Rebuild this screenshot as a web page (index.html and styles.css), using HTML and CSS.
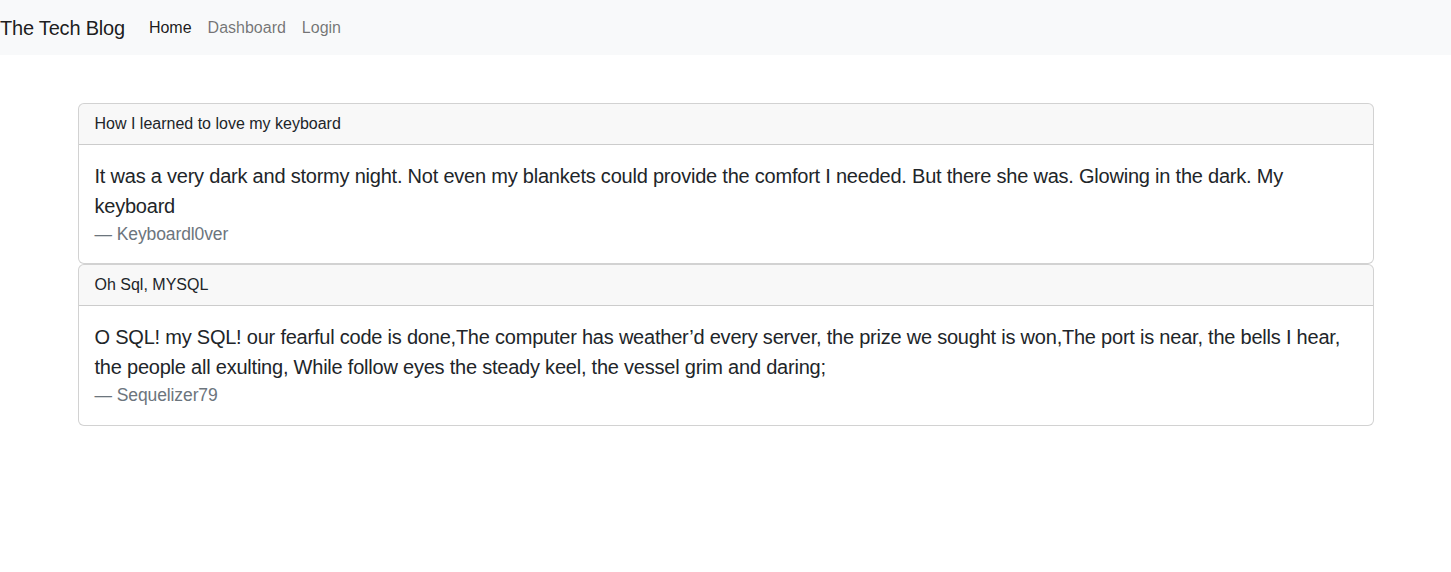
FILE: index.html
```html
<!DOCTYPE html>
<html lang="en">
<head>
<meta charset="utf-8">
<title>The Tech Blog</title>
<link rel="stylesheet" href="styles.css">
</head>
<body>
<nav class="navbar">
  <a class="brand" href="#">The Tech Blog</a>
  <ul class="nav">
    <li><a class="nav-link active" href="#">Home</a></li>
    <li><a class="nav-link" href="#">Dashboard</a></li>
    <li><a class="nav-link" href="#">Login</a></li>
  </ul>
</nav>
<main class="container">
  <article class="card">
    <div class="card-header">How I learned to love my keyboard</div>
    <div class="card-body">
      <blockquote class="quote">
        <p>It was a very dark and stormy night. Not even my blankets could provide the comfort I needed. But there she was. Glowing in the dark. My keyboard</p>
        <footer class="quote-footer">Keyboardl0ver</footer>
      </blockquote>
    </div>
  </article>
  <article class="card">
    <div class="card-header">Oh Sql, MYSQL</div>
    <div class="card-body">
      <blockquote class="quote">
        <p>O SQL! my SQL! our fearful code is done,The computer has weather’d every server, the prize we sought is won,The port is near, the bells I hear, the people all exulting, While follow eyes the steady keel, the vessel grim and daring;</p>
        <footer class="quote-footer">Sequelizer79</footer>
      </blockquote>
    </div>
  </article>
</main>
</body>
</html>
```

FILE: styles.css
```css
* { box-sizing: border-box; }
html, body {
  margin: 0;
  padding: 0;
}
body {
  font-family: "Liberation Sans", Arial, sans-serif;
  font-size: 16px;
  line-height: 1.5;
  color: #212529;
  background: #fff;
}
a { text-decoration: none; }

.navbar {
  display: flex;
  align-items: center;
  background: #f8f9fa;
  padding: 7.5px 0;
}
.brand {
  font-size: 20px;
  line-height: 30px;
  padding: 5px 0;
  margin-right: 16px;
  letter-spacing: -0.2px;
  color: rgba(0, 0, 0, 0.9);
}
.nav {
  display: flex;
  list-style: none;
  margin: 0;
  padding: 0;
}
.nav-link {
  display: block;
  padding: 8px;
  line-height: 24px;
  color: rgba(0, 0, 0, 0.55);
}
.nav-link.active { color: rgba(0, 0, 0, 0.9); }

.container {
  max-width: 1320px;
  margin: 48px auto 0;
  padding: 0 12px;
}
.card {
  border: 1px solid rgba(0, 0, 0, 0.175);
  border-radius: 6px;
  overflow: hidden;
  background: #fff;
}
.card-header {
  padding: 8px 16px;
  background: rgba(33, 37, 41, 0.03);
  border-bottom: 1px solid rgba(0, 0, 0, 0.175);
}
.card-body {
  padding: 16px;
}
.quote {
  margin: 0;
  font-size: 20px;
  line-height: 30px;
}
.quote p {
  margin: 0;
  letter-spacing: -0.22px;
}
.quote-footer {
  font-size: 0.875em;
  line-height: 1.5;
  letter-spacing: -0.1px;
  color: #6c757d;
}
.quote-footer::before { content: "\2014\00A0"; }
```
